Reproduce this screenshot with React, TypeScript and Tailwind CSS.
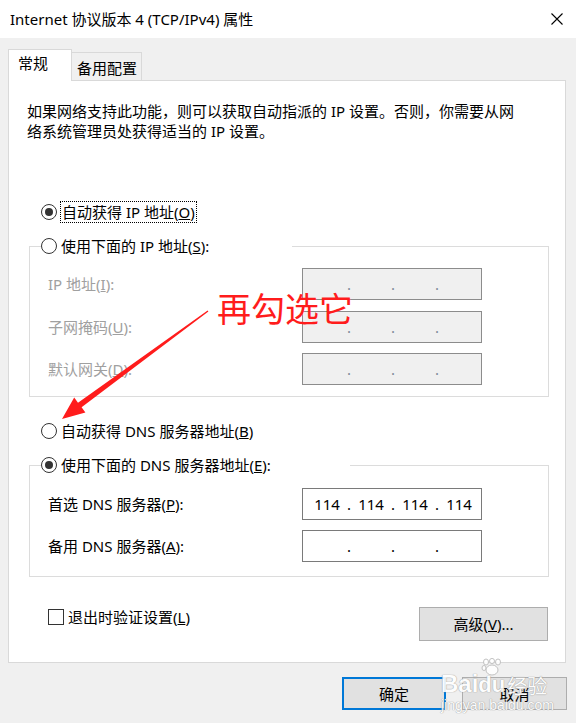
import React from "react";

function Radio({ checked }: { checked?: boolean }) {
  return (
    <span className="w-[16px] h-[16px] rounded-full border border-[#333333] bg-white flex items-center justify-center shrink-0">
      {checked ? <span className="w-[8px] h-[8px] rounded-full bg-[#333333]" /> : null}
    </span>
  );
}

function IpBox({ disabled, values }: { disabled?: boolean; values: string[] }) {
  const box = disabled
    ? "w-[180px] h-[32px] border border-[#8c8c8c] bg-[#f0f0f0] flex items-center pl-[8px]"
    : "w-[180px] h-[32px] border border-[#7a7a7a] bg-white flex items-center pl-[8px]";
  const dot = disabled ? "w-[12px] text-center text-[#7f8a99]" : "w-[12px] text-center text-black";
  return (
    <div className={box}>
      {values.map((v, i) => (
        <React.Fragment key={i}>
          <span className="w-[32px] text-center text-black">{v}</span>
          {i < 3 ? <span className={dot}>.</span> : null}
        </React.Fragment>
      ))}
    </div>
  );
}

export default function App() {
  const empty = ["", "", "", ""];
  return (
    <div className="relative w-[576px] h-[723px] overflow-hidden bg-[#f0f0f0] text-black text-[15px] leading-[20px] font-['Noto_Sans','Noto_Sans_CJK_SC',sans-serif]">
      {/* Title bar */}
      <div className="h-[38px] bg-white flex items-center justify-between pl-[10px] pr-[13px]">
        <span className="whitespace-nowrap">Internet 协议版本 4 (TCP/IPv4) 属性</span>
        <svg width="12" height="12" viewBox="0 0 12 12">
          <path d="M0.5 0.5 L11.5 11.5 M11.5 0.5 L0.5 11.5" stroke="#000" strokeWidth="1.1" fill="none" />
        </svg>
      </div>

      {/* Body */}
      <div className="px-[8px] pt-[11px]">
        {/* Tabs */}
        <div className="flex items-start h-[31px]">
          <div className="relative z-10 w-[64px] h-[32px] bg-white border-l border-r border-t border-[#d9d9d9] pl-[9px] pt-[3px]">
            常规
          </div>
          <div className="mt-[3px] w-[70px] h-[28px] bg-[#f0f0f0] border-t border-r border-[#d9d9d9] pl-[5px] pt-[5px] whitespace-nowrap">
            备用配置
          </div>
        </div>

        {/* Panel */}
        <div className="w-[558px] h-[583px] bg-white border border-[#d9d9d9] flex flex-col">
          <div className="mt-[20px] pl-[18px] whitespace-nowrap">
            <div>如果网络支持此功能，则可以获取自动指派的 IP 设置。否则，你需要从网</div>
            <div>络系统管理员处获得适当的 IP 设置。</div>
          </div>

          <div className="mt-[60px] ml-[32px] h-[22px] flex items-center gap-[3px]">
            <Radio checked />
            <span className="h-[22px] leading-[20px] border border-dotted border-black px-[1px] whitespace-nowrap">
              自动获得 IP 地址(<u>O</u>)
            </span>
          </div>

          <fieldset className="mt-[12px] ml-[20px] w-[520px] border border-[#dcdcdc] pl-[18px] pt-[11px] pb-[11px]">
            <legend className="ml-[-7px] w-[251px] h-[22px] flex items-center gap-[4px] whitespace-nowrap">
              <Radio />
              <span>使用下面的 IP 地址(<u>S</u>):</span>
            </legend>
            <div className="grid grid-cols-[254px_180px] gap-y-[10.5px] items-center text-[#a0a0a0]">
              <span>IP 地址(<u>I</u>):</span>
              <IpBox disabled values={empty} />
              <span>子网掩码(<u>U</u>):</span>
              <IpBox disabled values={empty} />
              <span>默认网关(<u>D</u>):</span>
              <IpBox disabled values={empty} />
            </div>
          </fieldset>

          <div className="mt-[23px] ml-[32px] h-[22px] flex items-center gap-[4px] whitespace-nowrap">
            <Radio />
            <span>自动获得 DNS 服务器地址(<u>B</u>)</span>
          </div>

          <fieldset className="mt-[12px] ml-[20px] w-[520px] border border-[#dcdcdc] pl-[18px] pt-[12px] pb-[14px]">
            <legend className="ml-[-7px] w-[309px] h-[22px] flex items-center gap-[4px] whitespace-nowrap">
              <Radio checked />
              <span>使用下面的 DNS 服务器地址(<u>E</u>):</span>
            </legend>
            <div className="grid grid-cols-[254px_180px] gap-y-[10px] items-center">
              <span>首选 DNS 服务器(<u>P</u>):</span>
              <IpBox values={["114", "114", "114", "114"]} />
              <span>备用 DNS 服务器(<u>A</u>):</span>
              <IpBox values={empty} />
            </div>
          </fieldset>

          <div className="mt-[29px] pl-[39px] pr-[17px] flex justify-between items-start">
            <div className="h-[22px] flex items-center gap-[4px] whitespace-nowrap">
              <span className="w-[16px] h-[16px] border border-[#333333] bg-white shrink-0" />
              <span>退出时验证设置(<u>L</u>)</span>
            </div>
            <div className="mt-[1px] w-[129px] h-[34px] bg-[#e1e1e1] border border-[#adadad] flex items-center justify-center whitespace-nowrap">
              高级(<u>V</u>)...
            </div>
          </div>
        </div>

        {/* Bottom buttons */}
        <div className="mt-[14px] flex justify-end gap-[16px] pr-[1px]">
          <div className="w-[104px] h-[33px] bg-[#e1e1e1] border-2 border-[#0078d7] flex items-center justify-center">确定</div>
          <div className="w-[105px] h-[33px] bg-[#e1e1e1] border border-[#adadad] flex items-center justify-center">取消</div>
        </div>
      </div>

      {/* Red annotation */}
      <div className="absolute left-[217px] top-[291px] text-[34px] leading-none text-[#ff1c1c] whitespace-nowrap font-['Noto_Sans_CJK_SC',sans-serif]">
        再勾选它
      </div>
      <svg className="absolute left-0 top-0 pointer-events-none" width="576" height="723" viewBox="0 0 576 723">
        <polygon
          points="208.4,311.5 81.6,407.2 85.4,412.6 62,419 74.2,397.6 78.0,402.8 207.6,310.5"
          fill="#ff1c1c"
        />
      </svg>

      {/* Watermark */}
      <div className="absolute left-[441px] top-[660px] pointer-events-none text-white opacity-90 [text-shadow:0_0_1px_#9a9a9a,0_0_1px_#9a9a9a]">
        <div className="flex items-end h-[36px]">
          <span className="text-[24px] leading-none font-bold font-['Liberation_Sans',sans-serif]">Bai</span>
          <span className="relative flex flex-col items-center">
            <svg width="22" height="18" viewBox="0 0 22 18" className="mb-[-2px]">
              <g fill="#ffffff" stroke="#bdbdbd" strokeWidth="1">
                <ellipse cx="5" cy="4" rx="2.5" ry="3" />
                <ellipse cx="11" cy="3" rx="2.5" ry="2.6" />
                <ellipse cx="17" cy="4" rx="2.5" ry="3" />
                <ellipse cx="3" cy="10" rx="2" ry="2.5" />
                <ellipse cx="11" cy="12" rx="6" ry="5" />
              </g>
            </svg>
            <span className="text-[22px] leading-none font-bold font-['Liberation_Sans',sans-serif]">du</span>
          </span>
          <span className="ml-[2px] text-[20px] leading-none font-['Noto_Sans_CJK_SC',sans-serif]">经验</span>
        </div>
        <div className="text-[14px] leading-[16px] mt-[1px] font-['Liberation_Sans',sans-serif]">jingyan.baidu.com</div>
      </div>
    </div>
  );
}
